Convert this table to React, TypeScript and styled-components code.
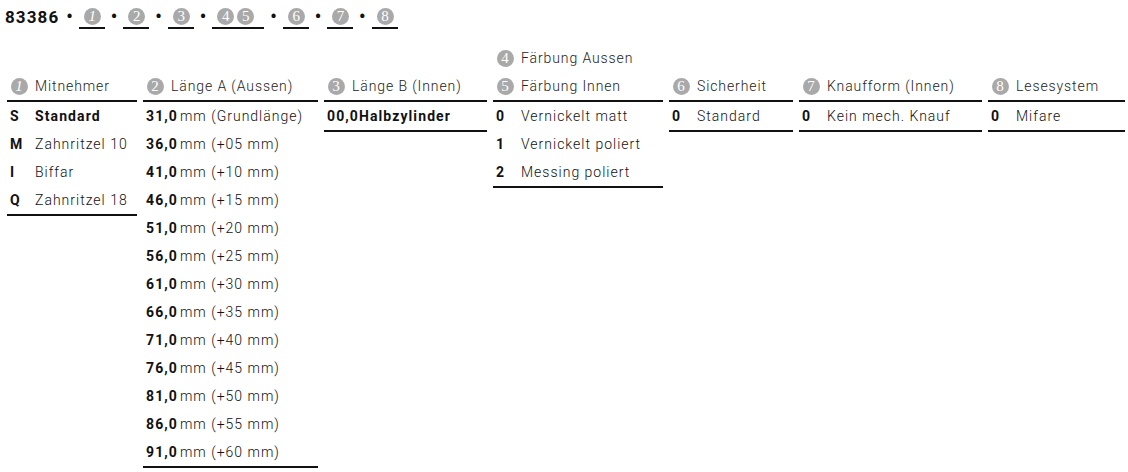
import React from 'react';
import styled, { createGlobalStyle } from 'styled-components';

const GlobalStyle = createGlobalStyle`
  html, body {
    margin: 0;
    padding: 0;
    background: #ffffff;
  }
  body {
    font-family: Roboto, "Liberation Sans", sans-serif;
    color: #111111;
  }
`;

const Page = styled.div`
  width: 1128px;
  height: 472px;
  overflow: hidden;
`;

const TopLine = styled.div`
  display: flex;
  align-items: center;
  height: 30px;
  padding: 2px 0 0 5px;
  gap: 6px;
`;

const ArticleNo = styled.span`
  font-size: 17px;
  font-weight: 700;
  letter-spacing: 1.1px;
  margin-right: 1px;
`;

const Dot = styled.span`
  font-size: 18px;
  font-weight: 700;
  line-height: 1;
`;

const Marker = styled.span<{ $double?: boolean }>`
  display: inline-flex;
  gap: 3px;
  width: ${(p) => (p.$double ? 52 : 26)}px;
  box-sizing: border-box;
  padding: 2px 0 2px 5px;
  border-bottom: 2px solid #111;
`;

const Badge = styled.span`
  display: inline-flex;
  align-items: center;
  justify-content: center;
  width: 17px;
  height: 17px;
  border-radius: 50%;
  background: #a9a9a9;
  color: #ffffff;
  font-family: "Liberation Serif", "DejaVu Serif", serif;
  font-size: 15px;
  line-height: 1;
  flex-shrink: 0;
`;

const Table = styled.div`
  display: flex;
  align-items: flex-start;
  gap: 6px;
  padding: 12px 4px 0 7px;
`;

const Column = styled.div<{ $w: number }>`
  width: ${(p) => p.$w}px;
  flex-shrink: 0;
`;

const Head = styled.div`
  height: 56px;
  display: flex;
  flex-direction: column;
  justify-content: flex-end;
  border-bottom: 2px solid #111;
`;

const HeadRow = styled.div`
  height: 28px;
  display: flex;
  align-items: center;
  gap: 7px;
  padding-left: 4px;
  font-size: 14px;
  font-weight: 300;
  letter-spacing: 0.9px;
  color: #222;
  white-space: nowrap;
`;

const List = styled.div`
  border-bottom: 2px solid #111;
`;

const Row = styled.div`
  height: 28px;
  display: flex;
  align-items: center;
  padding-left: 3px;
  font-size: 14px;
  white-space: nowrap;
`;

const Code = styled.span`
  width: 25px;
  flex-shrink: 0;
  font-weight: 700;
`;

const Strong = styled.span`
  font-weight: 700;
  letter-spacing: 1.1px;
`;

const Light = styled.span<{ $lead?: boolean }>`
  font-weight: 300;
  letter-spacing: 1px;
  margin-left: ${(p) => (p.$lead ? 2 : 0)}px;
`;

type Coded = { code: string; label: string; bold?: boolean };

const mitnehmer: Coded[] = [
  { code: 'S', label: 'Standard', bold: true },
  { code: 'M', label: 'Zahnritzel 10' },
  { code: 'I', label: 'Biffar' },
  { code: 'Q', label: 'Zahnritzel 18' },
];

const laengen = [
  ['31,0', 'mm (Grundlänge)'],
  ['36,0', 'mm (+05 mm)'],
  ['41,0', 'mm (+10 mm)'],
  ['46,0', 'mm (+15 mm)'],
  ['51,0', 'mm (+20 mm)'],
  ['56,0', 'mm (+25 mm)'],
  ['61,0', 'mm (+30 mm)'],
  ['66,0', 'mm (+35 mm)'],
  ['71,0', 'mm (+40 mm)'],
  ['76,0', 'mm (+45 mm)'],
  ['81,0', 'mm (+50 mm)'],
  ['86,0', 'mm (+55 mm)'],
  ['91,0', 'mm (+60 mm)'],
];

const faerbung: Coded[] = [
  { code: '0', label: 'Vernickelt matt' },
  { code: '1', label: 'Vernickelt poliert' },
  { code: '2', label: 'Messing poliert' },
];

const CodedList = ({ items }: { items: Coded[] }) => (
  <List>
    {items.map((it) => (
      <Row key={it.code}>
        <Code>{it.code}</Code>
        {it.bold ? <Strong>{it.label}</Strong> : <Light>{it.label}</Light>}
      </Row>
    ))}
  </List>
);

const App: React.FC = () => {
  return (
    <Page>
      <GlobalStyle />
      <TopLine>
        <ArticleNo>83386</ArticleNo>
        <Dot>•</Dot>
        <Marker><Badge><i>1</i></Badge></Marker>
        <Dot>•</Dot>
        <Marker><Badge>2</Badge></Marker>
        <Dot>•</Dot>
        <Marker><Badge>3</Badge></Marker>
        <Dot>•</Dot>
        <Marker $double>
          <Badge>4</Badge>
          <Badge>5</Badge>
        </Marker>
        <Dot>•</Dot>
        <Marker><Badge>6</Badge></Marker>
        <Dot>•</Dot>
        <Marker><Badge>7</Badge></Marker>
        <Dot>•</Dot>
        <Marker><Badge>8</Badge></Marker>
      </TopLine>

      <Table>
        <Column $w={130}>
          <Head>
            <HeadRow><Badge><i>1</i></Badge>Mitnehmer</HeadRow>
          </Head>
          <CodedList items={mitnehmer} />
        </Column>

        <Column $w={175}>
          <Head>
            <HeadRow><Badge>2</Badge>Länge A (Aussen)</HeadRow>
          </Head>
          <List>
            {laengen.map(([v, t]) => (
              <Row key={v}>
                <Strong>{v}</Strong>
                <Light $lead>{t}</Light>
              </Row>
            ))}
          </List>
        </Column>

        <Column $w={163}>
          <Head>
            <HeadRow><Badge>3</Badge>Länge B (Innen)</HeadRow>
          </Head>
          <List>
            <Row><Strong>00,0Halbzylinder</Strong></Row>
          </List>
        </Column>

        <Column $w={170}>
          <Head>
            <HeadRow><Badge>4</Badge>Färbung Aussen</HeadRow>
            <HeadRow><Badge>5</Badge>Färbung Innen</HeadRow>
          </Head>
          <CodedList items={faerbung} />
        </Column>

        <Column $w={124}>
          <Head>
            <HeadRow><Badge>6</Badge>Sicherheit</HeadRow>
          </Head>
          <CodedList items={[{ code: '0', label: 'Standard' }]} />
        </Column>

        <Column $w={183}>
          <Head>
            <HeadRow><Badge>7</Badge>Knaufform (Innen)</HeadRow>
          </Head>
          <CodedList items={[{ code: '0', label: 'Kein mech. Knauf' }]} />
        </Column>

        <Column $w={137}>
          <Head>
            <HeadRow><Badge>8</Badge>Lesesystem</HeadRow>
          </Head>
          <CodedList items={[{ code: '0', label: 'Mifare' }]} />
        </Column>
      </Table>
    </Page>
  );
};

export default App;
